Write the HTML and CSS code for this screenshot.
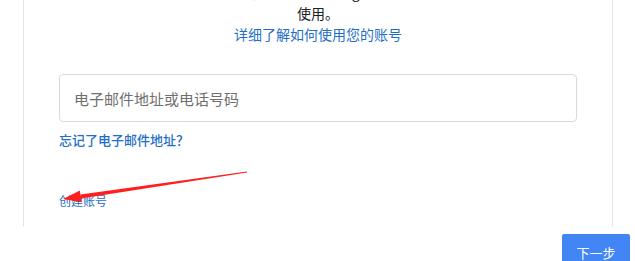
FILE: index.html
```html
<!DOCTYPE html>
<html lang="zh-CN">
<head>
    <meta charset="UTF-8">
    <meta name="viewport" content="width=device-width, initial-scale=1.0">
    <title>登录</title>
    <link rel="stylesheet" href="styles.css">
</head>
<body>
    <div id="root" class="page">
        <div class="signin-card">
            <p class="intro">如果您使用的是 Chromebook，那么您的 Google 账号也可以在其他应用和服务中<br>使用。</p>
            <a class="learn-link" href="#">详细了解如何使用您的账号</a>
            <div class="field">
                <input class="field-input" type="text" placeholder="电子邮件地址或电话号码">
            </div>
            <a class="forgot-link" href="#">忘记了电子邮件地址？</a>
            <a class="create-link" href="#">创建账号</a>
        </div>
        <div class="actions">
            <button class="next-button">下一步</button>
        </div>

        <!-- annotation arrow drawn over the page -->
        <svg class="note-arrow" width="635" height="261" viewBox="0 0 635 261">
            <polygon points="247,171.5 247,172.5 81.1,198.4 80.5,194.4" fill="#ff1f1f"/>
            <polygon points="63,199 79.9,190.5 81.7,202.3" fill="#ff1f1f"/>
        </svg>
    </div>
</body>
</html>
```

FILE: styles.css
```css
body, html {
    margin: 0;
    padding: 0;
    height: 100%;
    width: 100%;
    overflow: hidden;
    background: #fff;
    font-family: "Noto Sans CJK SC", "Noto Sans", sans-serif;
}

.page {
    position: relative;
    width: 635px;
    height: 261px;
    overflow: hidden;
}

.signin-card {
    display: flex;
    flex-direction: column;
    align-items: flex-start;
    box-sizing: border-box;
    width: 590px;
    margin: -18px 0 0 23px;
    padding: 0 35px 15px;
    border-left: 1px solid #e3e3e3;
    border-right: 1px solid #e3e3e3;
}

.intro {
    align-self: stretch;
    margin: 0;
    font-size: 14px;
    line-height: 21px;
    color: #202124;
    text-align: center;
    white-space: nowrap;
}

.learn-link,
.forgot-link,
.create-link {
    font-size: 13px;
    line-height: 20px;
    color: #1f6fc5;
    text-decoration: none;
}

.learn-link {
    align-self: center;
    font-size: 14px;
}

.field {
    align-self: stretch;
    margin-top: 30px;
}

.field-input {
    display: block;
    box-sizing: border-box;
    width: 100%;
    height: 48px;
    padding: 0 14px;
    border: 1px solid #dadada;
    border-radius: 4px;
    font-family: inherit;
    font-size: 15px;
    color: #202124;
    outline: none;
}

.field-input::placeholder {
    color: #6f6f6f;
}

.forgot-link {
    margin-top: 8px;
    font-weight: 500;
}

.create-link {
    margin-top: 41px;
    font-size: 12px;
}

.actions {
    display: flex;
    justify-content: flex-end;
    margin-top: 8px;
    padding-right: 5px;
}

.next-button {
    width: 68px;
    height: 36px;
    padding: 0;
    border: none;
    border-radius: 2px;
    background-color: #4285f4;
    color: #fff;
    font-family: inherit;
    font-size: 13px;
    cursor: pointer;
}

.note-arrow {
    position: absolute;
    top: 0;
    left: 0;
    pointer-events: none;
}
```
